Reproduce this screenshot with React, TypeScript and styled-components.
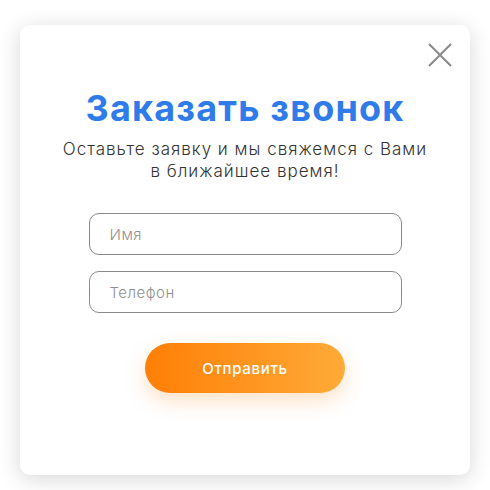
import React from "react";
import styled, { createGlobalStyle } from "styled-components";

const Global = createGlobalStyle`
  html, body { margin: 0; padding: 0; background: #fff; }
  body { font-family: Inter, "Open Sans", sans-serif; }
  * { box-sizing: border-box; }
`;

const Page = styled.div`
  width: 490px;
  height: 490px;
  padding: 25px 20px 15px;
`;

const Card = styled.div`
  position: relative;
  width: 450px;
  height: 450px;
  background: #fff;
  border-radius: 10px;
  box-shadow: 0 4px 22px rgba(0, 0, 0, 0.16);
  display: flex;
  flex-direction: column;
  align-items: center;
  padding-top: 62px;
`;

const Close = styled.button`
  position: absolute;
  top: 16px;
  right: 16px;
  width: 28px;
  height: 28px;
  padding: 0;
  border: none;
  background: transparent;
  display: flex;
  align-items: center;
  justify-content: center;
`;

const Title = styled.h2`
  margin: 0;
  font-family: Inter, sans-serif;
  font-weight: 700;
  font-size: 36px;
  line-height: 42px;
  color: #2f7bea;
  letter-spacing: 1.2px;
`;

const Subtitle = styled.p`
  margin: 9px 0 0;
  font-family: Inter, sans-serif;
  font-weight: 300;
  font-size: 17px;
  line-height: 22px;
  color: #333;
  text-align: center;
  letter-spacing: 1px;
`;

const Form = styled.form`
  margin-top: 31px;
  display: flex;
  flex-direction: column;
  align-items: center;
  gap: 16px;
`;

const Input = styled.input`
  width: 313px;
  height: 42px;
  border: 1px solid #8a8a8a;
  border-radius: 10px;
  padding: 0 20px;
  font-family: Inter, sans-serif;
  font-weight: 300;
  font-size: 15px;
  letter-spacing: 0.5px;
  color: #333;
  outline: none;
  &::placeholder { color: #8f8f8f; }
`;

const Submit = styled.button`
  margin-top: 14px;
  width: 200px;
  height: 50px;
  border: none;
  border-radius: 25px;
  background: linear-gradient(90deg, #ff7f06 0%, #ffaa38 100%);
  box-shadow: 0 8px 20px rgba(255, 140, 30, 0.25);
  color: #fff;
  font-family: Inter, sans-serif;
  font-weight: 500;
  font-size: 15px;
  letter-spacing: 0.7px;
`;

export default function App() {
  return (
    <Page>
      <Global />
      <Card>
        <Close aria-label="Закрыть">
          <svg width="24" height="24" viewBox="0 0 24 24">
            <path d="M1 1 L23 23 M23 1 L1 23" stroke="#888" strokeWidth="2" />
          </svg>
        </Close>
        <Title>Заказать звонок</Title>
        <Subtitle>
          Оставьте заявку и мы свяжемся с Вами
          <br />в ближайшее время!
        </Subtitle>
        <Form onSubmit={(e) => e.preventDefault()}>
          <Input placeholder="Имя" />
          <Input placeholder="Телефон" />
          <Submit type="submit">Отправить</Submit>
        </Form>
      </Card>
    </Page>
  );
}
